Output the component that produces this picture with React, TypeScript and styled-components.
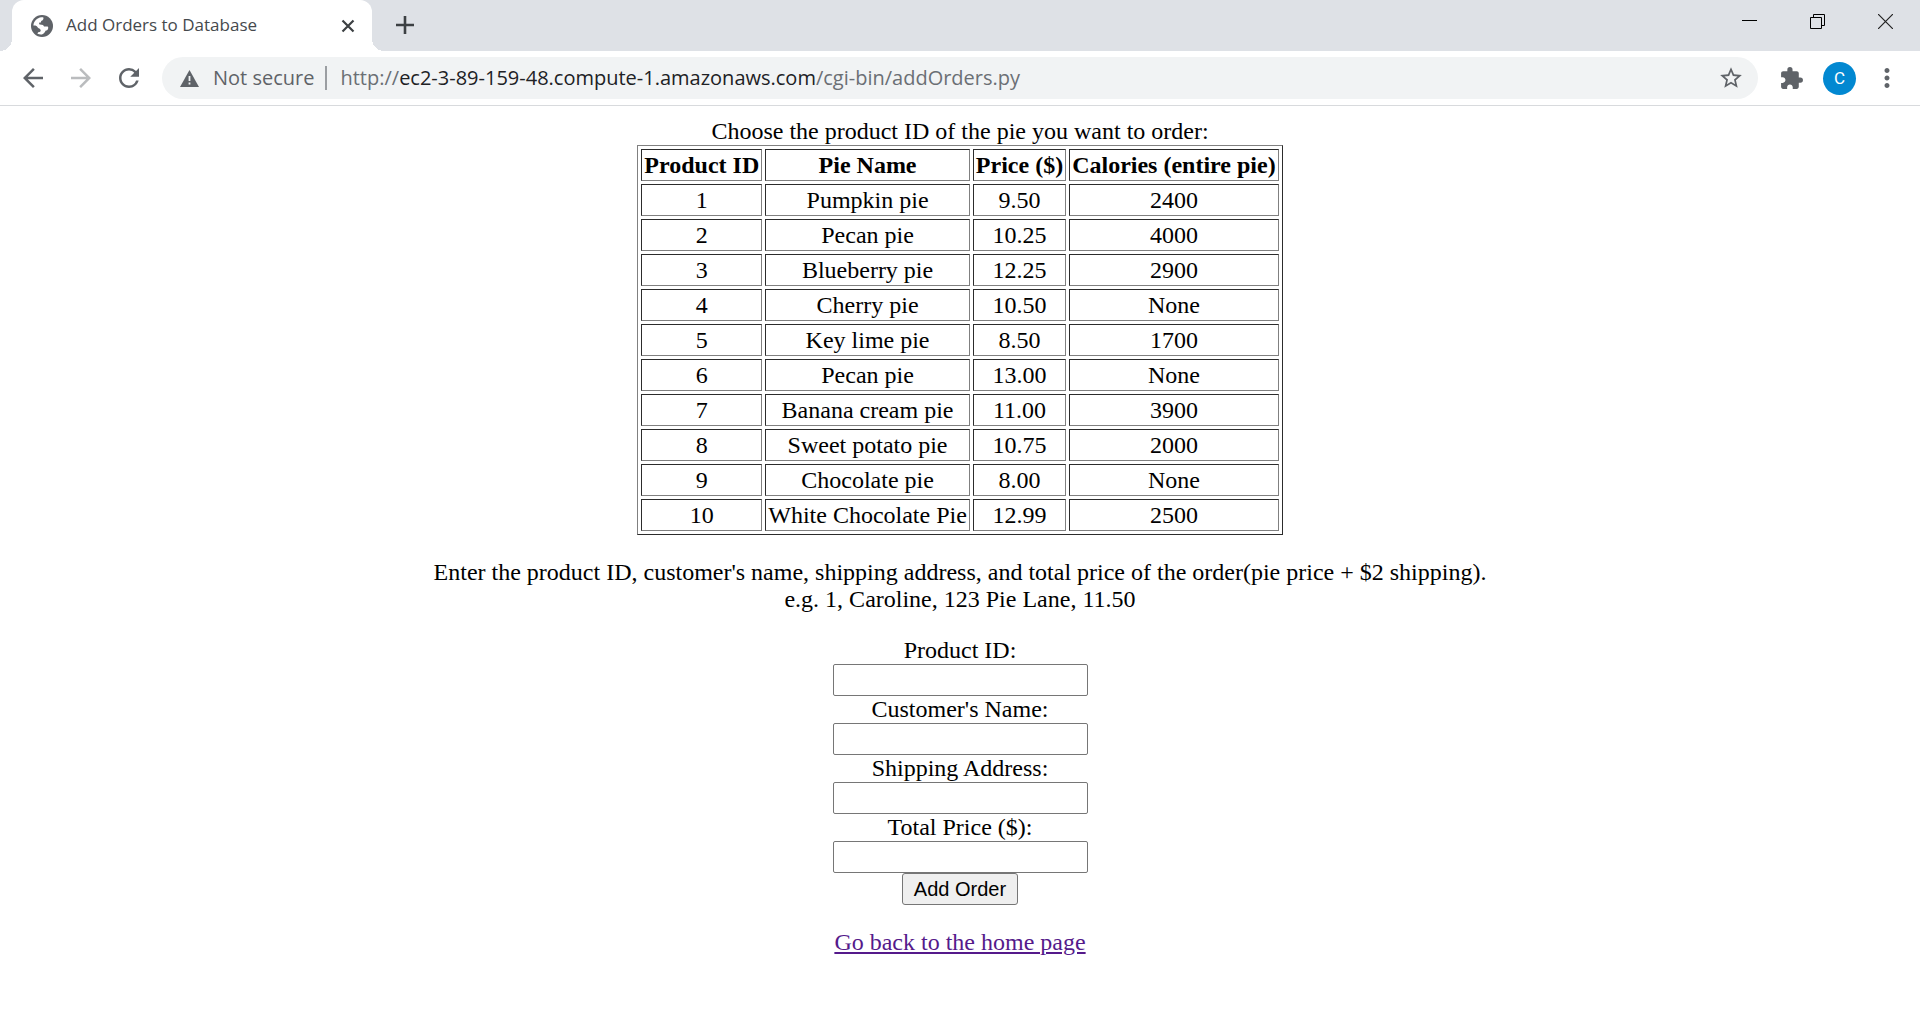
import React from "react";
import styled, { createGlobalStyle } from "styled-components";
import { MdArrowBack, MdArrowForward, MdExtension, MdMoreVert, MdRefresh, MdStarBorder } from "react-icons/md";

const GlobalStyle = createGlobalStyle`
  body {
    margin: 0;
    background: #fff;
    color: #000;
    font-family: "Liberation Serif", "Times New Roman", serif;
    font-size: 24px;
    line-height: 27px;
  }
`;

const IconButton = styled.button<{ $width: number; $color?: string }>`
  display: flex;
  align-items: center;
  justify-content: center;
  flex: none;
  width: ${(p) => p.$width}px;
  height: 42px;
  padding: 0;
  border: 0;
  background: none;
  color: ${(p) => p.$color ?? "#5f6368"};
`;

const TabStrip = styled.header`
  display: flex;
  align-items: flex-start;
  height: 51px;
  padding-left: 12px;
  background: #dee1e6;
`;

const Tab = styled.div`
  position: relative;
  display: flex;
  align-items: center;
  box-sizing: border-box;
  width: 360px;
  height: 51px;
  padding: 0 8px 0 19px;
  border-radius: 12px 12px 0 0;
  background: #fff;

  &::before,
  &::after {
    content: "";
    position: absolute;
    bottom: 0;
    width: 12px;
    height: 12px;
  }
  &::before {
    right: 100%;
    background: radial-gradient(circle at 0 0, transparent 12px, #fff 12px);
  }
  &::after {
    left: 100%;
    background: radial-gradient(circle at 100% 0, transparent 12px, #fff 12px);
  }
`;

const TabTitle = styled.span`
  flex: 1;
  padding: 0 0 2px 13px;
  color: #45494d;
  font-family: "Segoe UI", "Open Sans", sans-serif;
  font-size: 17px;
  line-height: 24px;
  white-space: nowrap;
`;

const NewTabSlot = styled.div`
  flex: 1;
  padding: 4px 0 0 12px;
`;

const WindowControls = styled.div`
  display: flex;
  padding-right: 1px;
`;

const Toolbar = styled.nav`
  display: flex;
  align-items: center;
  box-sizing: border-box;
  height: 55px;
  padding: 6px 12px 6px 9px;
  border-bottom: 1px solid #d8dadd;
`;

const AddressBar = styled.div`
  display: flex;
  align-items: center;
  flex: 1;
  box-sizing: border-box;
  height: 42px;
  margin: 0 12px 0 9px;
  padding: 0 6px 0 18px;
  border-radius: 21px;
  background: #f1f3f4;
  font-family: "Segoe UI", "Open Sans", sans-serif;
  font-size: 20px;
  line-height: 28px;
  white-space: nowrap;
`;

const Security = styled.span`
  margin-left: 14px;
  padding-right: 11px;
  color: #5f6368;
`;

const Divider = styled.span`
  width: 2px;
  height: 24px;
  margin-right: 13px;
  background: #9b9ea2;
`;

const Url = styled.span`
  flex: 1;
  color: #6b6f74;

  b {
    color: #202124;
    font-weight: 400;
  }
`;

const Avatar = styled.button`
  width: 33px;
  height: 33px;
  margin: 0 10px 0 11px;
  padding: 0;
  border: 0;
  border-radius: 50%;
  background: #0288d1;
  color: #fff;
  font: 17px/33px Roboto, sans-serif;
`;

const Page = styled.main`
  display: flex;
  flex-direction: column;
  align-items: center;
  gap: 24px;
  padding: 12px;
  text-align: center;
`;

const PieTable = styled.table`
  border: 1px outset #808080;
  border-spacing: 3px;

  caption {
    white-space: nowrap;
  }

  th,
  td {
    padding: 1px 2px;
    border: 1px inset #808080;
    line-height: 28px;
  }
`;

const Paragraph = styled.p`
  margin: 0;
`;

const OrderForm = styled.form`
  display: flex;
  flex-direction: column;
  align-items: center;
`;

const Field = styled.input`
  box-sizing: border-box;
  width: 255px;
  height: 32px;
  padding: 1px 3px;
  border: 1px solid #767676;
  border-radius: 2px;
  background: #fff;
  font: 20px "Liberation Sans", Arial, sans-serif;
`;

const SubmitButton = styled.button`
  box-sizing: border-box;
  height: 32px;
  padding: 0 11px;
  border: 1px solid #767676;
  border-radius: 3px;
  background: #efefef;
  color: #000;
  font: 20px "Liberation Sans", Arial, sans-serif;
`;

const HomeLink = styled.a`
  color: #551a8b;
  text-decoration: underline;
`;

const GlobeIcon = () => (
  <svg width="22" height="22" viewBox="0 0 22 22" aria-hidden="true">
    <circle cx="11" cy="11" r="11" fill="#5f6368" />
    <path
      fill="#fff"
      d="M2.4 10.6C2.6 6.4 6 2.7 10.4 2.3h1.8c.6 1.3.2 2.5-.9 3.2-.6.4-1.2.3-1.2.9 0 .8-.4 1.2-1.2 1.2-.8 0-.9.6-.7 1.4.3.8 1.5.6 2.7.7 1.5.1 1.9 1 2.1 1.9h3c1 0 1.4.7 1.2 1.6-.4 1.9-1.7 2.3-2.7 2.5-.4 1.5-1.5 2.8-3.6 3.8-1.6.2-3.2-.1-4.4-.7.1-1.3.8-1.9 2.1-1.9 1.1-.1 1.3-1.1.9-2.1-.5-1.3-1.8-1.3-2.5-2.1-.7-.9-1.5-1.7-2.6-2.1z"
    />
  </svg>
);

const CloseIcon = () => (
  <svg width="14" height="14" viewBox="0 0 14 14" aria-hidden="true">
    <path d="M1.5 1.5l11 11M12.5 1.5l-11 11" stroke="#3c4043" strokeWidth="2.2" />
  </svg>
);

const PlusIcon = () => (
  <svg width="18" height="18" viewBox="0 0 18 18" aria-hidden="true">
    <path d="M9 0v18M0 9h18" stroke="#3c4043" strokeWidth="2.6" />
  </svg>
);

const WarningIcon = () => (
  <svg width="19" height="17" viewBox="0 0 19 17" aria-hidden="true">
    <path d="M9.5 0L19 17H0z" fill="#5f6368" />
    <path d="M9.5 6v5M9.5 12.5v2" stroke="#f1f3f4" strokeWidth="1.8" />
  </svg>
);

const MinimizeIcon = () => (
  <svg width="15" height="15" viewBox="0 0 15 15" aria-hidden="true">
    <path d="M0 6.5h15" stroke="#000" />
  </svg>
);

const RestoreIcon = () => (
  <svg width="15" height="15" viewBox="0 0 15 15" fill="none" stroke="#000" aria-hidden="true">
    <path d="M.5 3.5h11v11H.5zM3.5 3.5v-3h11v11h-3" />
  </svg>
);

const WindowCloseIcon = () => (
  <svg width="15" height="15" viewBox="0 0 15 15" aria-hidden="true">
    <path d="M0 0l15 15M15 0L0 15" stroke="#222" strokeWidth="1.2" />
  </svg>
);

const pies = [
  ["1", "Pumpkin pie", "9.50", "2400"],
  ["2", "Pecan pie", "10.25", "4000"],
  ["3", "Blueberry pie", "12.25", "2900"],
  ["4", "Cherry pie", "10.50", "None"],
  ["5", "Key lime pie", "8.50", "1700"],
  ["6", "Pecan pie", "13.00", "None"],
  ["7", "Banana cream pie", "11.00", "3900"],
  ["8", "Sweet potato pie", "10.75", "2000"],
  ["9", "Chocolate pie", "8.00", "None"],
  ["10", "White Chocolate Pie", "12.99", "2500"],
];

const fields = [
  { id: "product", label: "Product ID:" },
  { id: "customer", label: "Customer's Name:" },
  { id: "address", label: "Shipping Address:" },
  { id: "total", label: "Total Price ($):" },
];

export default function App() {
  return (
    <>
      <GlobalStyle />
      <TabStrip>
        <Tab>
          <GlobeIcon />
          <TabTitle>Add Orders to Database</TabTitle>
          <IconButton $width={32} aria-label="Close tab"><CloseIcon /></IconButton>
        </Tab>
        <NewTabSlot>
          <IconButton $width={42} aria-label="New tab"><PlusIcon /></IconButton>
        </NewTabSlot>
        <WindowControls>
          <IconButton $width={68} aria-label="Minimize"><MinimizeIcon /></IconButton>
          <IconButton $width={68} aria-label="Restore"><RestoreIcon /></IconButton>
          <IconButton $width={68} aria-label="Close"><WindowCloseIcon /></IconButton>
        </WindowControls>
      </TabStrip>
      <Toolbar>
        <IconButton $width={48} aria-label="Back"><MdArrowBack size={30} /></IconButton>
        <IconButton $width={48} $color="#babcbe" aria-label="Forward"><MdArrowForward size={30} /></IconButton>
        <IconButton $width={48} aria-label="Reload"><MdRefresh size={30} /></IconButton>
        <AddressBar>
          <WarningIcon />
          <Security>Not secure</Security>
          <Divider />
          <Url>http://<b>ec2-3-89-159-48.compute-1.amazonaws.com</b>/cgi-bin/addOrders.py</Url>
          <IconButton $width={42} aria-label="Bookmark this page"><MdStarBorder size={26} /></IconButton>
        </AddressBar>
        <IconButton $width={42} aria-label="Extensions"><MdExtension size={25} /></IconButton>
        <Avatar aria-label="Profile">C</Avatar>
        <IconButton $width={42} aria-label="Menu"><MdMoreVert size={30} /></IconButton>
      </Toolbar>
      <Page>
        <PieTable>
          <caption>Choose the product ID of the pie you want to order:</caption>
          <thead>
            <tr>
              <th>Product ID</th>
              <th>Pie Name</th>
              <th>Price ($)</th>
              <th>Calories (entire pie)</th>
            </tr>
          </thead>
          <tbody>
            {pies.map((row) => (
              <tr key={row[0]}>
                {row.map((cell, i) => <td key={i}>{cell}</td>)}
              </tr>
            ))}
          </tbody>
        </PieTable>
        <Paragraph>
          Enter the product ID, customer's name, shipping address, and total price of the order(pie price + $2 shipping).
          <br />
          e.g. 1, Caroline, 123 Pie Lane, 11.50
        </Paragraph>
        <OrderForm>
          {fields.map((f) => (
            <React.Fragment key={f.id}>
              <label htmlFor={f.id}>{f.label}</label>
              <Field id={f.id} type="text" />
            </React.Fragment>
          ))}
          <SubmitButton type="button">Add Order</SubmitButton>
        </OrderForm>
        <HomeLink href="#home">Go back to the home page</HomeLink>
      </Page>
    </>
  );
}
